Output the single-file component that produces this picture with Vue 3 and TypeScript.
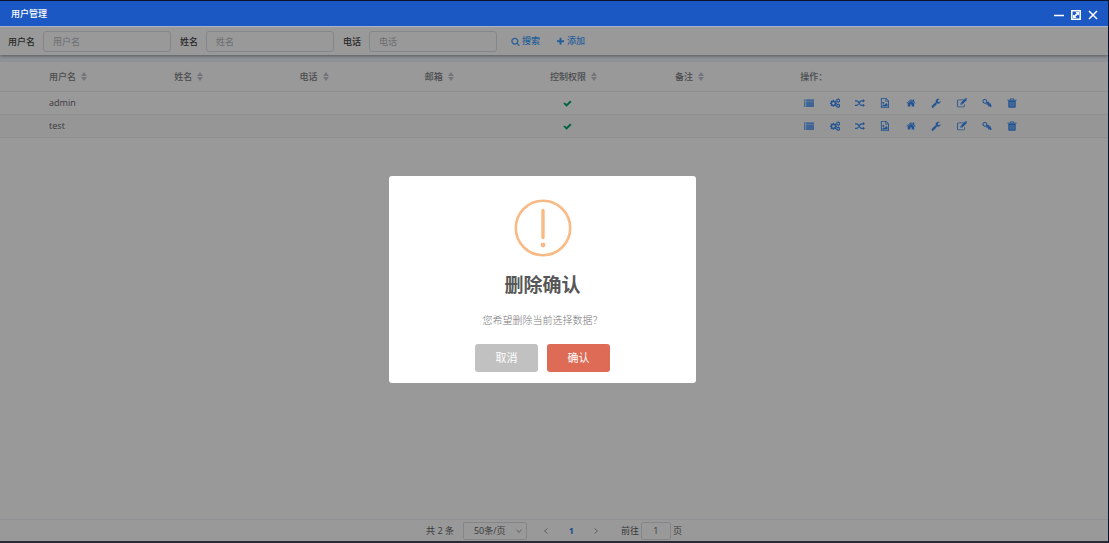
<script setup lang="ts">
import { ref } from 'vue'

interface User { name: string; control: boolean }

const filters = [
  { id: 'username', label: '用户名' },
  { id: 'fullname', label: '姓名' },
  { id: 'phone', label: '电话' },
]
const columns = ['用户名', '姓名', '电话', '邮箱', '控制权限', '备注']
const users: User[] = [
  { name: 'admin', control: true },
  { name: 'test', control: true },
]
const pageSize = ref('50')
const page = ref('1')

const icons: Record<string, string> = {
  search: 'M1216 832q0-185-131.5-316.5t-316.5-131.5-316.5 131.5-131.5 316.5 131.5 316.5 316.5 131.5 316.5-131.5 131.5-316.5zm512 832q0 52-38 90t-90 38q-54 0-90-38l-343-342q-179 124-399 124-143 0-273.5-55.5t-225-150-150-225-55.5-273.5 55.5-273.5 150-225 225-150 273.5-55.5 273.5 55.5 225 150 150 225 55.5 273.5q0 220-124 399l343 343q37 37 37 90z',
  plus: 'M1600 736v192q0 40-28 68t-68 28h-416v416q0 40-28 68t-68 28h-192q-40 0-68-28t-28-68v-416h-416q-40 0-68-28t-28-68v-192q0-40 28-68t68-28h416v-416q0-40 28-68t68-28h192q40 0 68 28t28 68v416h416q40 0 68 28t28 68z',
  check: 'M1671 566q0 40-28 68l-724 724-136 136q-28 28-68 28t-68-28l-136-136-362-362q-28-28-28-68t28-68l136-136q28-28 68-28t68 28l294 295 656-657q28-28 68-28t68 28l136 136q28 28 28 68z',
}
const actions = [
  { label: '列表', path: 'M0 256h256v240H0zM384 256h1408v240H384zM0 608h256v240H0zM384 608h1408v240H384zM0 960h256v240H0zM384 960h1408v240H384zM0 1312h256v240H0zM384 1312h1408v240H384z' },
  { label: '设置', path: 'M510 330h200l30 160 110 46 134-92 142 142-92 134 46 110 160 30v200l-160 30-46 110 92 134-142 142-134-92-110 46-30 160H510l-30-160-110-46-134 92L94 1334l92-134-46-110-160-30V860l160-30 46-110-92-134 142-142 134 92 110-46zM610 720a240 240 0 1 0 1 0zM1400 60h140l30 110 110 50 112-20 70 120-80 90v120l80 90-70 120-112-20-110 50-30 110h-140l-30-110-110-50-112 20-70-120 80-90V410l-80-90 70-120 112 20 110-50zM1470 330a135 135 0 1 0 1 0zM1400 980h140l30 110 110 50 112-20 70 120-80 90v120l80 90-70 120-112-20-110 50-30 110h-140l-30-110-110-50-112 20-70-120 80-90v-120l-80-90 70-120 112 20 110-50zM1470 1250a135 135 0 1 0 1 0z' },
  { label: '随机', path: 'M0 384h256q210 0 350 170l410 560q90 102 200 102h192v-192l384 288-384 320v-192h-192q-220 0-360-180L450 700q-80-92-194-92H0zM0 1216h256q114 0 194-92l110-140 140 188-94 98q-140 170-350 170H0zM740 690l116-140q140-166 360-166h192V160l384 320-384 320V608h-192q-110 0-200 102l-134 166z' },
  { label: '图片', path: 'M160 0h964l480 480v1312H160zM320 150v1492h1124V608h-480V150zM1124 180v300h300zM600 704a170 170 0 1 0 1 0zM420 1536v-192l264-224 128 128 320-352 224 224v416z' },
  { label: '主页', path: 'M1472 992v480q0 26-19 45t-45 19h-384v-384h-256v384h-384q-26 0-45-19t-19-45v-480q0-1 .5-3t.5-3l575-474 575 474q1 2 1 6zm223-69l-62 74q-8 9-21 11h-3q-13 0-21-7l-692-577-692 577q-12 8-24 7-13-2-21-11l-62-74q-8-10-7-23.5t11-21.5l719-599q32-26 76-26t76 26l244 204v-195q0-14 9-23t23-9h192q14 0 23 9t9 23v408l219 182q10 8 11 21.5t-7 23.5z' },
  { label: '维护', path: 'M448 1472q0-26-19-45t-45-19-45 19-19 45 19 45 45 19 45-19 19-45zm644-420l-682 682q-37 37-90 37-52 0-91-37l-106-108q-38-36-38-90 0-53 38-91l681-681q39 98 114.5 173.5t173.5 114.5zm634-435q0 39-23 106-47 134-164.5 217.5t-258.5 83.5q-185 0-316.5-131.5t-131.5-316.5 131.5-316.5 316.5-131.5q58 0 121.5 16.5t107.5 46.5q16 11 16 28t-16 28l-293 169v224l193 107q5-3 79-48.5t135.5-81 70.5-35.5q15 0 23.5 10t8.5 25z' },
  { label: '编辑', path: 'M288 256h960l-128 128H288q-130 0-130 160v832q0 160 130 160h832q160 0 160-160v-230l128-128v358q0 288-288 288H288q-288 0-288-288V544Q0 256 288 256zM608 928l830-830 290 290-830 830H608zM704 980v140h130l40-40-130-140zM1536 0h120l136 136v120l-60 70-270-270z' },
  { label: '密钥', path: 'M520 160a430 430 0 0 1 420 520l130 80 120-90 150 120-70 130 100 80 130-60 130 130-70 130 150 160v150l-130 110h-140l-140-180-120 90-130-120 80-140-120-110-140 90-110-120 90-140-80-60a430 430 0 1 1-250-770zM520 340a250 250 0 1 0 1 0z' },
  { label: '删除', path: 'M576 96h640l80 208h400v176H96V304h400zM640 304h512l-40-80H680zM224 544h1344v1040q0 160-160 160H384q-160 0-160-160zM500 720v820h90V720zM850 720v820h90V720zM1200 720v820h90V720z' },
]
</script>

<template>
  <div class="window">
    <header class="titlebar">
      <h1>用户管理</h1>
      <div class="controls">
        <button type="button" aria-label="最小化"><svg viewBox="0 0 10 10"><path d="M0 5.5h10" /></svg></button>
        <button type="button" aria-label="最大化"><svg viewBox="0 0 10 10"><path d="M.8.8h8.4v8.4H.8z" /><path class="solid" d="M4.4 2H8v3.6L6.8 4.4 4.4 6.8 5.6 8H2V4.4l1.2 1.2 2.4-2.4z" /></svg></button>
        <button type="button" aria-label="关闭"><svg viewBox="0 0 10 10"><path d="M1 1l8 8M9 1L1 9" /></svg></button>
      </div>
    </header>

    <form class="toolbar" @submit.prevent>
      <div v-for="f in filters" :key="f.id" class="field">
        <label :for="f.id">{{ f.label }}</label>
        <input :id="f.id" type="text" :placeholder="f.label" />
      </div>
      <div class="links">
        <button type="submit"><svg viewBox="0 0 1792 1792"><path :d="icons.search" /></svg>搜索</button>
        <button type="button"><svg viewBox="0 0 1792 1792"><path :d="icons.plus" /></svg>添加</button>
      </div>
    </form>

    <main class="content">
      <table>
        <colgroup>
          <col class="col-index" />
          <col v-for="c in columns" :key="c" class="col-data" />
          <col />
        </colgroup>
        <thead>
          <tr>
            <th></th>
            <th v-for="c in columns" :key="c">
              <span class="sortable">{{ c }}<svg viewBox="0 0 6 9"><path d="M3 0l3 4H0zM3 9L0 5h6z" /></svg></span>
            </th>
            <th>操作：</th>
          </tr>
        </thead>
        <tbody>
          <tr v-for="u in users" :key="u.name">
            <td></td>
            <td>{{ u.name }}</td>
            <td></td>
            <td></td>
            <td></td>
            <td class="check"><svg v-if="u.control" viewBox="0 0 1792 1792" role="img" aria-label="是"><path :d="icons.check" /></svg></td>
            <td></td>
            <td>
              <div class="actions">
                <button v-for="a in actions" :key="a.label" type="button" :aria-label="a.label">
                  <svg viewBox="0 0 1792 1792"><path :d="a.path" /></svg>
                </button>
              </div>
            </td>
          </tr>
        </tbody>
      </table>
    </main>

    <footer class="pagination">
      <span>共 2 条</span>
      <div class="select">
        <select v-model="pageSize" aria-label="每页条数">
          <option value="50">50条/页</option>
          <option value="100">100条/页</option>
        </select>
        <svg viewBox="0 0 6 6"><path d="M.5 1.5L3 4.5l2.5-3" /></svg>
      </div>
      <nav class="pager" aria-label="分页">
        <button type="button" aria-label="上一页"><svg viewBox="0 0 6 6"><path d="M4.5.5L1.5 3l3 2.5" /></svg></button>
        <button type="button" class="current">1</button>
        <button type="button" aria-label="下一页"><svg viewBox="0 0 6 6"><path d="M1.5.5L4.5 3l-3 2.5" /></svg></button>
      </nav>
      <label class="jump">前往<input v-model="page" type="text" />页</label>
    </footer>
  </div>

  <div class="backdrop"></div>
  <div class="dialog-wrap">
    <section class="dialog" role="dialog" aria-labelledby="dialog-title">
      <svg class="warning" viewBox="0 0 58 58">
        <circle cx="29" cy="29" r="27.2" />
        <path d="M29 11.5v27" />
        <circle class="dot" cx="29" cy="46" r="2.4" />
      </svg>
      <h2 id="dialog-title">删除确认</h2>
      <p>您希望删除当前选择数据？</p>
      <div class="buttons">
        <button type="button" class="cancel">取消</button>
        <button type="button" class="confirm">确认</button>
      </div>
    </section>
  </div>
</template>

<style>
body { margin: 0; }
</style>

<style scoped>
.window, .dialog-wrap {
  font-family: "Open Sans", "Noto Sans CJK SC", sans-serif;
  font-size: 9px;
  line-height: 14px;
}
.window {
  box-sizing: border-box;
  min-height: 100vh;
  display: flex;
  flex-direction: column;
  background: #fff;
  color: #606266;
  border: 1px solid #10224f;
  border-left: 0;
  border-bottom: 2px solid #46465c;
}
button, input, select { font: inherit; box-sizing: border-box; margin: 0; }
button { border: 0; padding: 0; background: none; cursor: pointer; }
svg { display: block; fill: currentColor; }
.titlebar {
  position: relative;
  z-index: 2;
  display: flex;
  align-items: center;
  justify-content: space-between;
  box-sizing: border-box;
  height: 26px;
  padding: 0 10px 0 11px;
  background: #1c58c4;
  border-bottom: 1px solid #a9b5cc;
  color: #fff;
}
h1 { margin: 0; font-size: 9px; font-weight: 500; }
.controls { display: flex; gap: 7px; padding-top: 3px; }
.controls svg { width: 10px; height: 10px; fill: none; stroke: #fff; stroke-width: 1.5; }
.controls .solid { fill: #fff; stroke: none; }
.toolbar {
  position: relative;
  display: flex;
  align-items: center;
  gap: 9px;
  box-sizing: border-box;
  height: 28px;
  padding: 0 8px;
  box-shadow: 0 1px 3px rgba(0, 0, 0, .4);
}
.field { display: flex; align-items: center; gap: 8px; }
.field label { padding-top: 2px; color: #444; font-weight: 500; }
.field input {
  width: 128px;
  height: 21px;
  padding: 0 9px;
  border: 1px solid #dcdfe6;
  border-radius: 3px;
  background: #fff;
  color: #606266;
}
.field input::placeholder { color: #b4b7be; opacity: 1; }
.links { display: flex; gap: 16px; padding-left: 5px; }
.links button { display: flex; align-items: center; gap: 2px; color: #409eff; font-weight: 500; }
.links svg { width: 9px; height: 9px; }
.content { flex: 1; border-top: 7px solid #eef3f9; }
table { width: 100%; table-layout: fixed; border-collapse: collapse; }
.col-index { width: 3.8%; }
.col-data { width: 11.3%; }
th, td { padding: 0 7px; text-align: left; border-bottom: 1px solid #ebeef5; }
th { height: 29px; color: #7c7f86; font-weight: 500; }
td { height: 22px; }
tbody tr:nth-child(even) { background: #fafafa; }
.sortable { display: flex; align-items: center; gap: 5px; }
.sortable svg { width: 6px; height: 9px; color: #c0c4cc; }
.check svg { width: 9px; height: 9px; margin-left: 13px; color: #00a86a; }
.actions { display: flex; justify-content: space-between; width: 213px; padding-left: 4px; }
.actions button { width: 10px; color: #3a8cf8; }
.actions svg { width: 10px; height: 10px; fill-rule: evenodd; }
.pagination {
  display: flex;
  align-items: center;
  justify-content: center;
  height: 21px;
  border-top: 1px solid #ebeef5;
}
.select { position: relative; margin-left: 9px; }
.select select {
  appearance: none;
  display: block;
  width: 64px;
  height: 18px;
  padding: 0 10px;
  border: 1px solid #dcdfe6;
  border-radius: 2px;
  background: #fff;
  color: #606266;
}
.select svg { position: absolute; right: 5px; top: 6px; }
.select svg, .pager svg { width: 6px; height: 6px; fill: none; stroke: #a0a3a9; }
.pager { display: flex; margin: 0 12px 0 7px; }
.pager button { display: flex; align-items: center; justify-content: center; width: 25px; height: 18px; }
.pager .current { color: #2a80f0; font-weight: 700; }
.jump { display: flex; align-items: center; gap: 2px; }
.jump input {
  width: 30px;
  height: 18px;
  padding: 0;
  border: 1px solid #dcdfe6;
  border-radius: 2px;
  background: #fff;
  color: #606266;
  text-align: center;
}
.backdrop { position: fixed; inset: 0; z-index: 1; background: rgba(0, 0, 0, .4); }
.dialog-wrap {
  position: fixed;
  inset: 0;
  z-index: 3;
  display: flex;
  align-items: center;
  justify-content: center;
  padding: 16px 24px 0 0;
}
.dialog {
  box-sizing: border-box;
  width: 307px;
  padding: 23px 16px 11px;
  border-radius: 3px;
  background: #fff;
  text-align: center;
}
.warning { width: 58px; height: 58px; margin: 0 auto; fill: none; stroke: #f8bb86; stroke-width: 2.6; }
.warning path { stroke-width: 3.4; stroke-linecap: round; }
.warning .dot { fill: #f8bb86; stroke: none; }
h2 { margin: 14px 0; font-size: 19px; line-height: 28px; font-weight: 700; color: #575757; }
.dialog p { margin: 0 0 17px; font-size: 10px; font-weight: 300; color: #797979; }
.buttons { display: flex; justify-content: center; gap: 9px; }
.buttons button { width: 63px; height: 28px; border-radius: 3px; color: #fff; font-size: 11px; }
.cancel { background: #c1c1c1; }
.confirm { background: #dd6b55; }
</style>
